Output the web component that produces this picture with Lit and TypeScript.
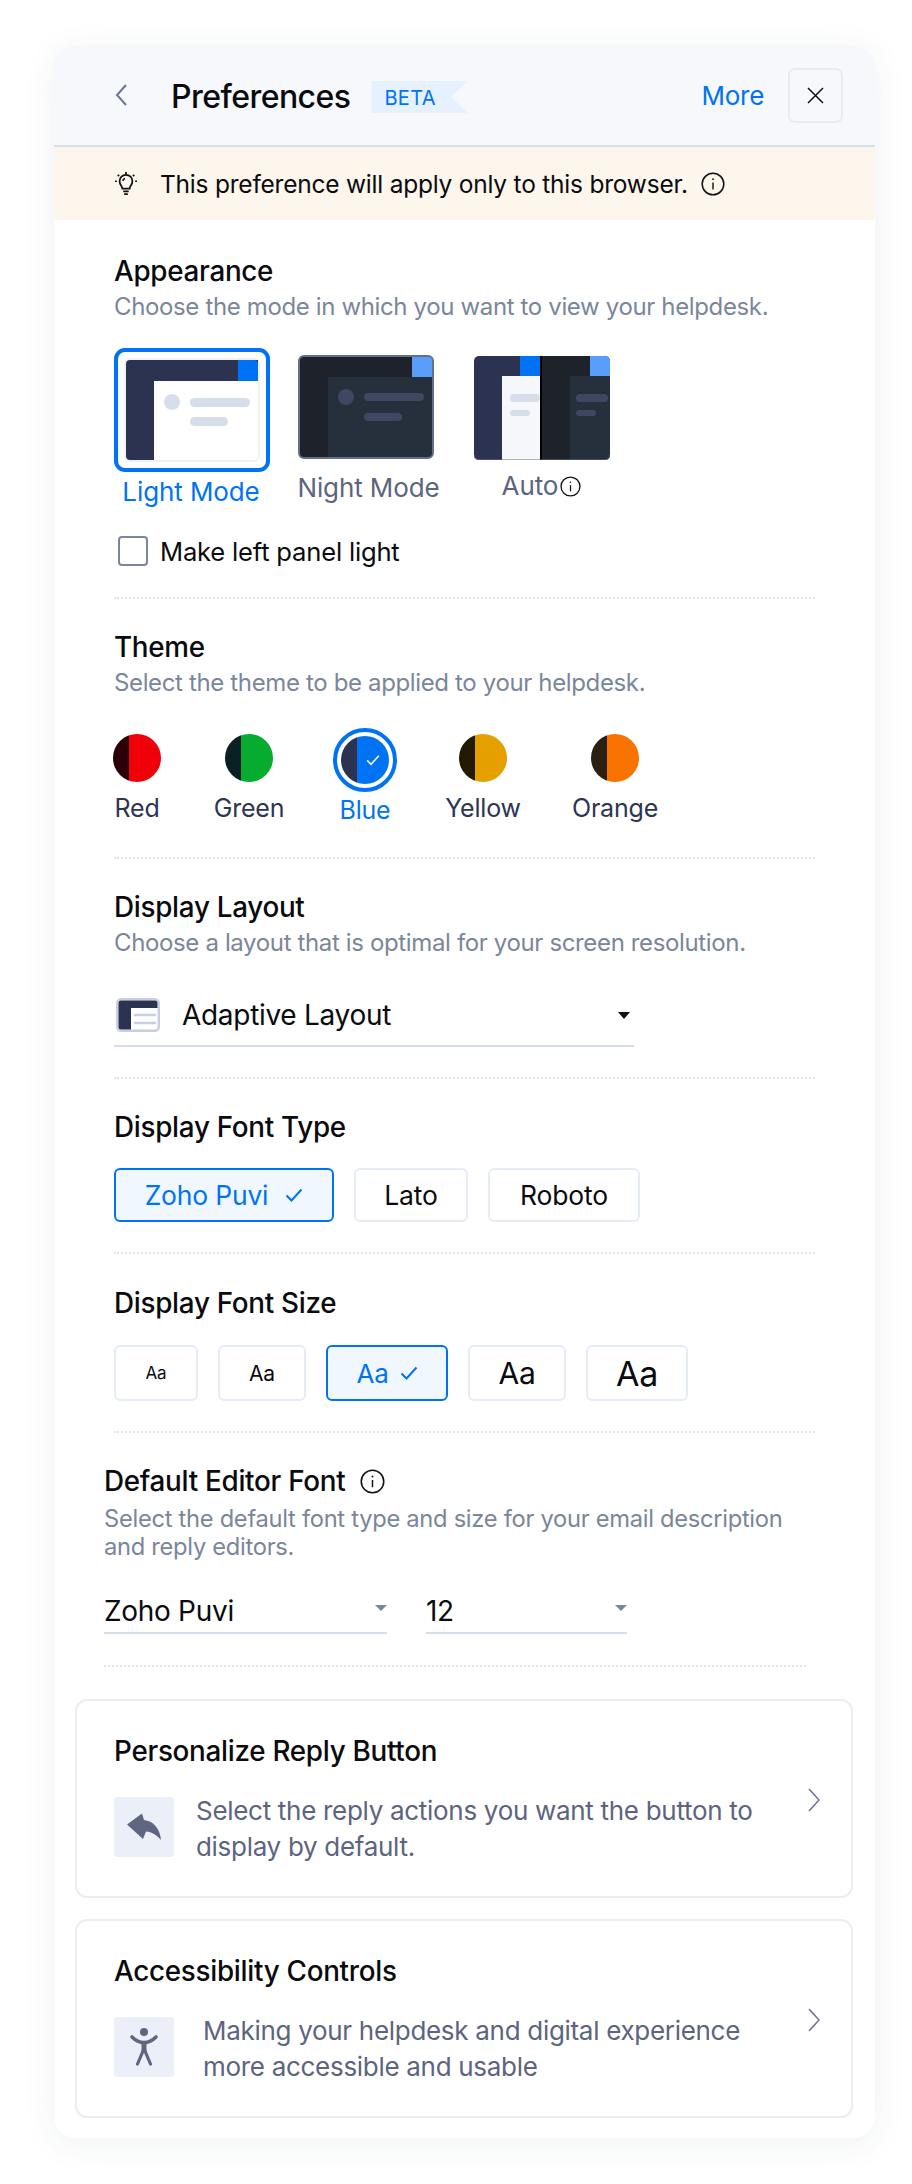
import { LitElement, html, css, svg } from "lit";
import { customElement } from "lit/decorators.js";

const infoIcon = (size: number) => html`<svg class="info" width=${size} height=${size} viewBox="0 0 24 24" fill="none" stroke="#111" stroke-width="1.5"><circle cx="12" cy="12" r="10.8"/><path d="M12 10.5v7" stroke-width="1.4"/><circle cx="12" cy="7.2" r=".9" fill="#111" stroke="none"/></svg>`;
const check = (c: string) => html`<svg width="18" height="14" viewBox="0 0 18 14" fill="none" stroke=${c} stroke-width="2"><path d="M1.5 7.5 6.5 12.5 16.5 1.5"/></svg>`;

const lightThumb = svg`<rect x="1" y="1" width="134" height="102" rx="5" fill="#fff" stroke="#eef2f8" stroke-width="2"/>
<path d="M6 2h128v21H30v79H6a4 4 0 0 1-4-4V6a4 4 0 0 1 4-4z" fill="#2c3350"/><path d="M114 2h16a4 4 0 0 1 4 4v17h-20z" fill="#0073f5"/>
<circle cx="48" cy="44" r="8" fill="#d5deea"/><rect x="66" y="40" width="60" height="9" rx="4.5" fill="#d5deea"/><rect x="66" y="59" width="38" height="9" rx="4.5" fill="#d5deea"/>`;
const nightThumb = svg`<rect x="1" y="1" width="134" height="102" rx="5" fill="#1e232b"/><path d="M30 22h105v76a5 5 0 0 1-5 5H30z" fill="#26303d"/>
<path d="M114 1h16a5 5 0 0 1 5 5v16h-21z" fill="#5a9efc"/><circle cx="48" cy="42" r="8" fill="#3f4763"/><rect x="66" y="38" width="60" height="8" rx="4" fill="#3f4763"/><rect x="66" y="58" width="38" height="8" rx="4" fill="#3f4763"/>
<rect x="1" y="1" width="134" height="102" rx="5" fill="none" stroke="#64708a" stroke-width="2"/>`;
const autoThumb = svg`<path d="M5 0h61v104H5a5 5 0 0 1-5-5V5a5 5 0 0 1 5-5z" fill="#2c3350"/><rect x="46" y="0" width="20" height="20" fill="#0073f5"/><rect x="28" y="20" width="38" height="84" fill="#f5f7fb"/>
<rect x="36" y="38" width="30" height="8" rx="4" fill="#d5deea"/><rect x="36" y="54" width="20" height="6" rx="3" fill="#d5deea"/>
<path d="M66 0h65a5 5 0 0 1 5 5v94a5 5 0 0 1-5 5H66z" fill="#1e232b"/><path d="M96 20h40v79a5 5 0 0 1-5 5H96z" fill="#26303d"/><path d="M116 0h15a5 5 0 0 1 5 5v15h-20z" fill="#5a9efc"/>
<rect x="66" y="0" width="2" height="104" fill="#000"/><rect x="102" y="38" width="32" height="8" rx="4" fill="#3f4763"/><rect x="102" y="54" width="20" height="6" rx="3" fill="#3f4763"/>
<path d="M0 99a5 5 0 0 0 5 5h126a5 5 0 0 0 5-5" fill="none" stroke="#64708a"/>`;

const swatches = [
  { name: "Red", w: 48, dark: "#2b0008", main: "#f00008" },
  { name: "Green", w: 80, dark: "#0b2024", main: "#05ac30" },
  { name: "Blue", w: 56, dark: "#2c3350", main: "#0073f5", sel: true },
  { name: "Yellow", w: 84, dark: "#221a02", main: "#e5a000" },
  { name: "Orange", w: 84, dark: "#2a1f10", main: "#f97300" },
];
const sizes = [
  { w: 84, fs: 17 }, { w: 88, fs: 21 }, { w: 122, fs: 26, sel: true }, { w: 98, fs: 30 }, { w: 102, fs: 34 },
];

@customElement("app-root")
export class AppRoot extends LitElement {
  static styles = css`
    :host { display: block; padding-top: 45px; background: #fff; font-family: Inter, "Liberation Sans", sans-serif; color: #0b0b0f; height: 2184px; box-sizing: border-box; }
    * { box-sizing: border-box; }
    .panel { margin-left: 54px; width: 821px; height: 2093px; border-radius: 22px; background: #fff; box-shadow: 0 6px 34px rgba(30,50,90,.07); padding-bottom: 21px; }
    .head { height: 102px; background: #f6f8fc; border-bottom: 2px solid #d5deea; border-radius: 22px 22px 0 0; display: flex; align-items: center; padding: 0 32px 0 60px; }
    .title { margin-left: 43px; margin-top: 4px; font-size: 32px; font-weight: 450; letter-spacing: -.55px; line-height: 40px; }
    .beta { margin-left: 21px; margin-top: 4px; width: 96px; height: 32px; background: #e6f1ff; color: #0073f5; font-size: 20px; line-height: 34px; padding-left: 13px; clip-path: polygon(0 0,100% 0,83% 50%,100% 100%,0 100%); letter-spacing: .3px; }
    .more { margin-left: auto; color: #0073f5; font-size: 26px; letter-spacing: -.3px; }
    .close { margin-left: 24px; width: 55px; height: 55px; border: 2px solid #e6ecf5; border-radius: 7px; display: flex; align-items: center; justify-content: center; }
    .banner { height: 73px; background: #fdf6ec; display: flex; align-items: center; padding-left: 61px; font-size: 24.5px; letter-spacing: -.22px; border-radius: 0 0 4px 4px; }
    .banner span { margin-left: 23px; margin-right: 13px; }
    .sec { margin-left: 60px; width: 701px; padding-top: 30px; padding-bottom: 30px; border-bottom: 2px dotted #dfe5ee; }
    .s-app { padding-top: 33px; padding-bottom: 31px; }
    .s-theme { padding-bottom: 32px; }
    h3 { margin: 0; font-size: 27.8px; font-weight: 450; line-height: 36px; letter-spacing: -.28px; }
    .sub { color: #7a869a; font-size: 24px; line-height: 36px; letter-spacing: -.36px; margin: 0; }
    .modes { display: flex; margin-top: 23px; }
    .mode { display: flex; flex-direction: column; align-items: center; width: 136px; }
    .mode svg.thumb { display: block; }
    .lbl { color: #5c6480; font-size: 26px; line-height: 30px; white-space: nowrap; letter-spacing: -.1px; display: flex; align-items: center; gap: 2px; }
    .m1 { width: 156px; height: 124px; border: 4px solid #0073f5; border-radius: 11px; padding: 6px; }
    .m1wrap { width: 156px; margin-right: 28px; }
    .m1wrap .lbl { color: #0073f5; margin-top: 5px; margin-left: -2px; }
    .m2wrap { margin-top: 7px; margin-right: 40px; }
    .m2wrap .lbl { margin-top: 14px; margin-left: 5px; }
    .m3wrap { margin-top: 8px; }
    .m3wrap .lbl { margin-top: 11px; margin-left: -1px; }
    .chk { display: flex; align-items: center; margin: 29px 0 0 4px; font-size: 25.6px; letter-spacing: -.2px; height: 30px; }
    .box { width: 30px; height: 30px; border: 2px solid #7a869a; border-radius: 4px; margin-right: 12px; flex: none; }
    .swatches { display: flex; gap: 48px; margin: 27px 0 0 -1px; }
    .sw { display: flex; flex-direction: column; align-items: center; color: #2d3553; font-size: 25px; line-height: 30px; letter-spacing: -.2px; }
    .dot { width: 48px; height: 48px; border-radius: 50%; overflow: hidden; display: flex; margin-top: 6px; margin-bottom: 11px; flex: none; }
    .dot i { display: block; height: 100%; }
    .dot i:first-child { width: 16px; }
    .dot i:last-child { width: 32px; display: flex; align-items: center; justify-content: center; }
    .ring { width: 64px; height: 64px; border: 4px solid #0073f5; border-radius: 50%; display: flex; align-items: center; justify-content: center; flex: none; margin-bottom: 3px; }
    .ring .dot { margin: 0; width: 48px; height: 48px; }
    .sw.sel { color: #0073f5; }
    .sel-row { width: 520px; height: 60px; border-bottom: 2px solid #d5deea; margin-top: 26px; display: flex; align-items: center; font-size: 28px; letter-spacing: -.3px; padding: 0 4px 2px 2px; }
    .sel-row span { margin-left: 22px; }
    .sel-row .caret { margin-left: auto; margin-right: 0; }
    .caret { width: 0; height: 0; border-left: 6px solid transparent; border-right: 6px solid transparent; border-top: 7px solid #111; }
    .btns { display: flex; gap: 20px; margin-top: 23px; }
    .btn { height: 54px; border: 2px solid #e6ecf5; border-radius: 6px; display: flex; align-items: center; justify-content: center; gap: 17px; font-size: 26.5px; letter-spacing: -.2px; }
    .btn.on { border-color: #0073f5; background: #f0f7ff; color: #0073f5; }
    .btns.s { margin-top: 24px; }
    .btns.s .btn { height: 56px; gap: 11px; }
    .s-size { padding-top: 31px; }
    .ed { margin-left: 50px; width: 702px; padding-bottom: 31px; }
    .ttl { display: flex; align-items: center; gap: 15px; }
    .ed .sub { line-height: 28px; margin-top: 6px; font-size: 23.7px; letter-spacing: -.28px; }
    .pair { display: flex; gap: 39px; margin-top: 29px; }
    .dd { height: 44px; border-bottom: 2px solid #d5deea; display: flex; align-items: center; justify-content: space-between; font-size: 28px; letter-spacing: -.3px; }
    .dd .caret { border-top-color: #7a869a; border-top-width: 6px; margin: 0 0 6px; }
    .card { margin: 32px 0 0 21px; width: 778px; height: 199px; border: 2px solid #e9eef5; border-radius: 12px; padding: 32px 31px 0 37px; }
    .card + .card { margin-top: 21px; }
    .row { display: flex; margin-top: 28px; align-items: flex-start; }
    .ico { width: 60px; height: 60px; background: #ebeff7; border-radius: 3px; flex: none; }
    .ico svg { display: block; }
    .row p { margin: -4px 0 0 22px; color: #5c6480; font-size: 26px; line-height: 36px; letter-spacing: -.3px; }
    .row.b p { margin-left: 29px; max-width: 550px; }
    .row .chev { margin: -9px 0 0 auto; flex: none; }
  `;

  render() {
    const chev = html`<svg class="chev" width="12" height="24" viewBox="0 0 12 24" fill="none" stroke="#6b7690" stroke-width="1.6"><path d="M1 1l10 11L1 23"/></svg>`;
    return html`<div class="panel">
      <div class="head">
        <svg class="back" width="14" height="24" viewBox="0 0 14 24" fill="none" stroke="#6b7690" stroke-width="2"><path d="M12 2 3 12l9 10"/></svg>
        <div class="title">Preferences</div>
        <div class="beta">BETA</div>
        <div class="more">More</div>
        <div class="close"><svg width="17" height="17" viewBox="0 0 17 17" stroke="#111" stroke-width="1.5"><path d="M1 1l15 15M16 1 1 16"/></svg></div>
      </div>
      <div class="banner">
        <svg width="22" height="24" viewBox="0 0 24 26" fill="none" stroke="#111" stroke-width="1.9"><path d="M8 18c0-3-3-4-3-8a7 7 0 0 1 14 0c0 4-3 5-3 8z"/><path d="M9 21h6M10 24h4M12 0v2M3 3l1.5 1.5M21 3l-1.5 1.5M0 10h2M22 10h2"/><path d="M8.5 9.5A3.6 3.6 0 0 1 11 7"/></svg>
        <span>This preference will apply only to this browser.</span>${infoIcon(24)}
      </div>

      <div class="sec s-app">
        <h3>Appearance</h3>
        <p class="sub">Choose the mode in which you want to view your helpdesk.</p>
        <div class="modes">
          <div class="mode m1wrap"><div class="m1"><svg class="thumb" width="136" height="104" viewBox="0 0 136 104">${lightThumb}</svg></div><div class="lbl">Light Mode</div></div>
          <div class="mode m2wrap"><svg class="thumb" width="136" height="104" viewBox="0 0 136 104">${nightThumb}</svg><div class="lbl">Night Mode</div></div>
          <div class="mode m3wrap"><svg class="thumb" width="136" height="104" viewBox="0 0 136 104">${autoThumb}</svg><div class="lbl">Auto${infoIcon(21)}</div></div>
        </div>
        <div class="chk"><div class="box"></div>Make left panel light</div>
      </div>

      <div class="sec s-theme">
        <h3>Theme</h3>
        <p class="sub">Select the theme to be applied to your helpdesk.</p>
        <div class="swatches">
          ${swatches.map((s) => s.sel
            ? html`<div class="sw sel" style="width:${s.w}px"><div class="ring"><div class="dot"><i style="background:${s.dark}"></i><i style="background:${s.main}"><svg width="14" height="12" viewBox="0 0 18 14" fill="none" stroke="#fff" stroke-width="2"><path d="M1.5 7.5 6.5 12.5 16.5 1.5"/></svg></i></div></div>${s.name}</div>`
            : html`<div class="sw" style="width:${s.w}px"><div class="dot"><i style="background:${s.dark}"></i><i style="background:${s.main}"></i></div>${s.name}</div>`)}
        </div>
      </div>

      <div class="sec">
        <h3>Display Layout</h3>
        <p class="sub">Choose a layout that is optimal for your screen resolution.</p>
        <div class="sel-row">
          <svg width="44" height="34" viewBox="0 0 44 34"><rect x="1.2" y="1.2" width="41.6" height="31.6" rx="4" fill="#fff" stroke="#c9cfe2" stroke-width="2.4"/><path d="M5 2.500h34a2.500 2.500 0 0 1 2.500 2.500v5H15v21.500H5a2.500 2.500 0 0 1-2.500-2.500V5A2.500 2.500 0 0 1 5 2.500z" fill="#2c3350"/><path d="M18 17h22M18 25h22" stroke="#c9cfe2" stroke-width="2.400"/></svg>
          <span>Adaptive Layout</span><div class="caret"></div>
        </div>
      </div>

      <div class="sec">
        <h3>Display Font Type</h3>
        <div class="btns">
          <div class="btn on" style="width:220px">Zoho Puvi ${check("#0073f5")}</div>
          <div class="btn" style="width:114px">Lato</div>
          <div class="btn" style="width:152px">Roboto</div>
        </div>
      </div>

      <div class="sec s-size">
        <h3>Display Font Size</h3>
        <div class="btns s">
          ${sizes.map((s) => html`<div class="btn ${s.sel ? "on" : ""}" style="width:${s.w}px;font-size:${s.fs}px">Aa${s.sel ? check("#0073f5") : ""}</div>`)}
        </div>
      </div>

      <div class="sec ed">
        <div class="ttl"><h3>Default Editor Font</h3>${infoIcon(25)}</div>
        <p class="sub">Select the default font type and size for your email description and reply editors.</p>
        <div class="pair">
          <div class="dd" style="width:283px">Zoho Puvi<div class="caret"></div></div>
          <div class="dd" style="width:201px">12<div class="caret"></div></div>
        </div>
      </div>

      <div class="card">
        <h3>Personalize Reply Button</h3>
        <div class="row">
          <div class="ico"><svg width="60" height="60" viewBox="0 0 60 60" fill="#5f6680"><path d="M13 27.500 28 16.500 30 23C39 24 46 31 47 43 42 37.500 38 35 32 34.500L29 42z"/></svg></div>
          <p>Select the reply actions you want the button to display by default.</p>
          ${chev}
        </div>
      </div>
      <div class="card">
        <h3>Accessibility Controls</h3>
        <div class="row b">
          <div class="ico"><svg width="60" height="60" viewBox="0 0 60 60" fill="none" stroke="#5f6680"><circle cx="30" cy="15" r="4" fill="#5f6680" stroke="none"/><path d="M18 20c4 4 8 5.500 12 5.500s8-1.500 12-5.500" stroke-width="3.600" stroke-linecap="round"/><path d="M30 25v11" stroke-width="5"/><path d="M29 34 23.500 47M31 34l5.500 13" stroke-width="3.200" stroke-linecap="round"/></svg></div>
          <p>Making your helpdesk and digital experience more accessible and usable</p>
          ${chev}
        </div>
      </div>
    </div>`;
  }
}
